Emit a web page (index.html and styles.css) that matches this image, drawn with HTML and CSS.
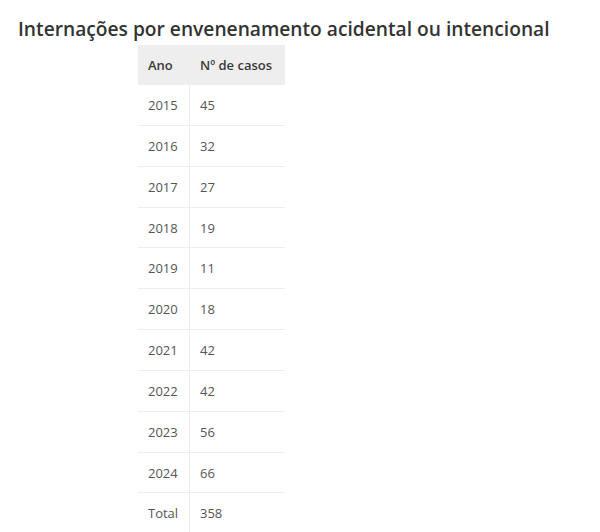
FILE: index.html
```html
<!DOCTYPE html>
<html lang="pt">
<head>
<meta charset="utf-8">
<link rel="stylesheet" href="styles.css">
</head>
<body>
<h2 class="title">Internações por envenenamento acidental ou intencional</h2>
<table class="data">
  <thead>
    <tr><th>Ano</th><th>Nº de casos</th></tr>
  </thead>
  <tbody>
    <tr><td>2015</td><td>45</td></tr>
    <tr><td>2016</td><td>32</td></tr>
    <tr><td>2017</td><td>27</td></tr>
    <tr><td>2018</td><td>19</td></tr>
    <tr><td>2019</td><td>11</td></tr>
    <tr><td>2020</td><td>18</td></tr>
    <tr><td>2021</td><td>42</td></tr>
    <tr><td>2022</td><td>42</td></tr>
    <tr><td>2023</td><td>56</td></tr>
    <tr><td>2024</td><td>66</td></tr>
    <tr><td>Total</td><td>358</td></tr>
  </tbody>
</table>
</body>
</html>
```
FILE: styles.css
```css
html, body {
  margin: 0;
  padding: 0;
  background: #fff;
}
body {
  font-family: "Open Sans", "Noto Sans", sans-serif;
  color: #555;
}
.title {
  margin: 0;
  padding: 16px 0 0 18px;
  font-size: 19.2px;
  line-height: 26px;
  font-weight: 600;
  color: #333;
}
.data {
  margin: 3px 0 0 138px;
  border-collapse: collapse;
  font-size: 13px;
}
.data th {
  background: #eee;
  font-weight: 600;
  color: #3a3a3a;
  text-align: left;
  padding: 10px 10px;
  line-height: 20px;
}
.data td {
  padding: 11px 10px 9px;
  line-height: 19.85px;
  border-top: 1px solid #eee;
}
.data th + th,
.data td + td {
  border-left: 1px solid #eee;
}
.data th:first-child, .data td:first-child {
  width: 31px;
}
.data th:last-child, .data td:last-child {
  width: 75px;
}
.data thead + tbody tr:first-child td {
  border-top: none;
}
```
